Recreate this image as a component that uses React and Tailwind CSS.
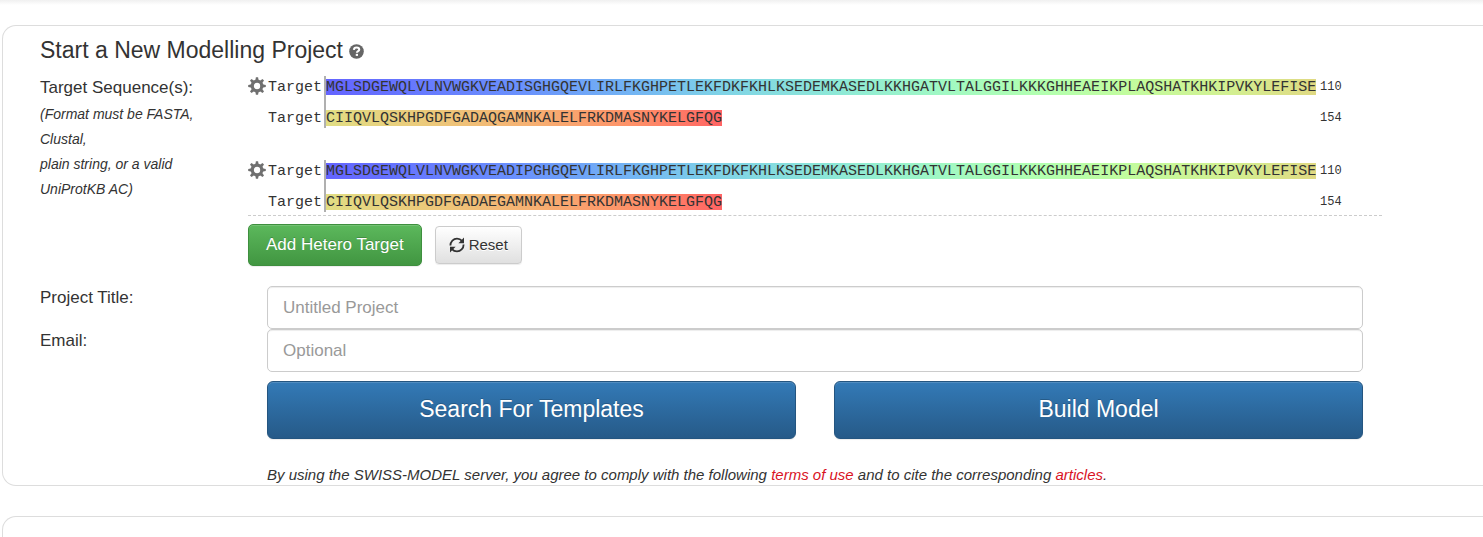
import React from "react";

const firstRowColors =
  "bg-[linear-gradient(to_right,#6464ff_0%,#6a92fc_20%,#74b8f2_32%,#7fd3e6_40%,#8ee9d6_52%,#a0f8c4_62%,#b2ffb0_72%,#c2fc9e_81%,#d2f092_91%,#e0d982_100%)]";
const secondRowColors =
  "bg-[linear-gradient(to_right,#e1de84_0%,#ecc87a_27%,#f6b072_52%,#fe9068_78%,#ff6464_100%)]";

const targets = [
  {
    id: 1,
    rows: [
      "MGLSDGEWQLVLNVWGKVEADISGHGQEVLIRLFKGHPETLEKFDKFKHLKSEDEMKASEDLKKHGATVLTALGGILKKKGHHEAEIKPLAQSHATKHKIPVKYLEFISE",
      "CIIQVLQSKHPGDFGADAQGAMNKALELFRKDMASNYKELGFQG",
    ],
  },
  {
    id: 2,
    rows: [
      "MGLSDGEWQLVLNVWGKVEADIPGHGQEVLIRLFKGHPETLEKFDKFKHLKSEDEMKASEDLKKHGATVLTALGGILKKKGHHEAEIKPLAQSHATKHKIPVKYLEFISE",
      "CIIQVLQSKHPGDFGADAEGAMNKALELFRKDMASNYKELGFQG",
    ],
  },
];

function Gear() {
  return (
    <svg viewBox="0 0 18 18" className="size-[18px]" fill="#707070" aria-hidden="true">
      {[0, 45, 90, 135, 180, 225, 270, 315].map((a) => (
        <path key={a} d="M7.3 4 L7.9 0.2 H10.1 L10.7 4 Z" transform={`rotate(${a} 9 9)`} />
      ))}
      <path
        fillRule="evenodd"
        d="M9 2.6a6.4 6.4 0 1 0 0 12.8a6.4 6.4 0 0 0 0-12.8ZM9 5.8a3.2 3.2 0 1 1 0 6.4a3.2 3.2 0 0 1 0-6.4Z"
      />
    </svg>
  );
}

function Alignment({ rows }) {
  return (
    <div className="flex font-['Liberation_Mono',monospace] text-[15px] leading-[14px] whitespace-nowrap text-[#333]">
      <button type="button" aria-label="Target options" className="flex size-5 shrink-0 items-center">
        <Gear />
      </button>
      <div className="flex w-14 shrink-0 flex-col gap-[10px]">
        {rows.map((r) => (
          <span key={r} className="flex h-[21px] items-center pt-[2px]">Target</span>
        ))}
      </div>
      <div className="flex w-[996px] shrink-0 flex-col gap-[10px] border-l-2 border-[#b0b0b0]">
        {rows.map((r, i) => (
          <div key={r} className="flex h-[21px] items-center">
            <span className={`pt-[2px] ${i === 0 ? firstRowColors : secondRowColors}`}>{r}</span>
          </div>
        ))}
      </div>
      <div className="flex flex-col gap-[10px] text-xs">
        <span className="flex h-[21px] items-center">110</span>
        <span className="flex h-[21px] items-center">154</span>
      </div>
    </div>
  );
}

const inputClass =
  "block h-[43px] w-full rounded-[5px] border border-[#ccc] bg-white px-[15px] text-[17px] text-[#555] shadow-[inset_0_1px_1px_rgba(0,0,0,0.075)] outline-none placeholder:text-[#999]";
const primaryClass =
  "h-[58px] flex-1 rounded-md border border-[#245580] bg-linear-to-b from-[#337ab7] to-[#265a88] pb-[2px] text-[23px] text-white shadow-[inset_0_1px_0_rgba(255,255,255,0.15),0_1px_1px_rgba(0,0,0,0.075)] [text-shadow:0_-1px_0_rgba(0,0,0,0.2)]";

export default function App() {
  return (
    <main className="h-screen overflow-hidden bg-white font-['Liberation_Sans',Arial,sans-serif] text-[#333]">
      <div className="h-[5px] bg-linear-to-b from-[#f0f0f0] to-white" />
      <section className="mt-5 ml-[2px] rounded-l-[14px] border border-r-0 border-[#ddd] pl-[37px]">
        <h1 className="mt-[10px] flex items-center gap-[6px] text-[23px] leading-7">
          Start a New Modelling Project
          <button type="button" aria-label="Help" className="mt-[2px]">
            <svg viewBox="0 0 16 16" className="size-[15px]" aria-hidden="true">
              <circle cx="8" cy="8" r="7.8" fill="#666" />
              <path d="M5.2 6.3C5.3 4.5 6.4 3.7 8.1 3.7C9.9 3.7 10.9 4.7 10.9 6C10.9 7.7 8.4 7.7 8.4 9.4" fill="none" stroke="#fff" strokeWidth="2.2" />
              <rect x="7.2" y="10.5" width="2.4" height="2.2" fill="#fff" />
            </svg>
          </button>
        </h1>

        <form className="mt-3 grid grid-cols-[208px_minmax(0,1fr)] pr-[101px]" onSubmit={(e) => e.preventDefault()}>
          <div>
            <h2 className="text-[17px] leading-6">Target Sequence(s):</h2>
            <p className="mt-[2px] text-sm leading-[25px] italic">
              (Format must be FASTA,
              <br />
              Clustal,
              <br />
              plain string, or a valid
              <br />
              UniProtKB AC)
            </p>
          </div>
          <div>
            <div className="flex flex-col gap-8 border-b border-dashed border-[#ccc] pb-[3px]">
              {targets.map((t) => (
                <Alignment key={t.id} rows={t.rows} />
              ))}
            </div>
            <div className="mt-2 flex items-center gap-[13px]">
              <button
                type="button"
                className="h-[42px] rounded-[5px] border border-[#3e8f3e] bg-linear-to-b from-[#5cb85c] to-[#419641] px-[17px] text-[17px] whitespace-nowrap text-white shadow-[inset_0_1px_0_rgba(255,255,255,0.15),0_1px_1px_rgba(0,0,0,0.075)] [text-shadow:0_-1px_0_rgba(0,0,0,0.2)]"
              >
                Add Hetero Target
              </button>
              <button
                type="button"
                className="flex h-[38px] items-center gap-1 rounded-sm border border-[#ccc] bg-linear-to-b from-white to-[#e0e0e0] px-[13px] text-[15px] shadow-[inset_0_1px_0_rgba(255,255,255,0.15),0_1px_1px_rgba(0,0,0,0.075)] [text-shadow:0_1px_0_#fff]"
              >
                <svg viewBox="0 0 16 16" className="size-4" fill="none" stroke="#333" strokeWidth="1.8" aria-hidden="true">
                  <path d="M1.4 8.6C1.4 4.4 4.4 1.6 8 1.6C10 1.6 11.8 2.4 13 3.8" />
                  <path d="M14.6 7.4C14.6 11.6 11.6 14.4 8 14.4C6 14.4 4.2 13.6 3 12.2" />
                  <path d="M15 0.6V6.2H9.4Z" fill="#333" stroke="none" />
                  <path d="M1 15.4V9.8H6.6Z" fill="#333" stroke="none" />
                </svg>
                Reset
              </button>
            </div>
          </div>

          <label htmlFor="title" className="mt-5 text-[17px] leading-6">Project Title:</label>
          <div className="mt-5 px-[19px]">
            <input id="title" type="text" placeholder="Untitled Project" className={inputClass} />
          </div>
          <label htmlFor="email" className="text-[17px] leading-6">Email:</label>
          <div className="px-[19px]">
            <input id="email" type="email" placeholder="Optional" className={inputClass} />
          </div>

          <div className="col-start-2 px-[19px]">
            <div className="mt-[9px] flex gap-[38px]">
              <button type="submit" className={primaryClass}>Search For Templates</button>
              <button type="submit" className={primaryClass}>Build Model</button>
            </div>
            <p className="mt-[26px] text-[15px] leading-5 italic">
              By using the SWISS-MODEL server, you agree to comply with the following{" "}
              <a href="#terms" className="text-[#d9131f]">terms of use</a> and to cite the corresponding{" "}
              <a href="#articles" className="text-[#d9131f]">articles</a>.
            </p>
          </div>
        </form>
      </section>
      <section className="mt-[30px] ml-[2px] h-24 rounded-l-[14px] border border-r-0 border-[#ddd]" />
    </main>
  );
}
